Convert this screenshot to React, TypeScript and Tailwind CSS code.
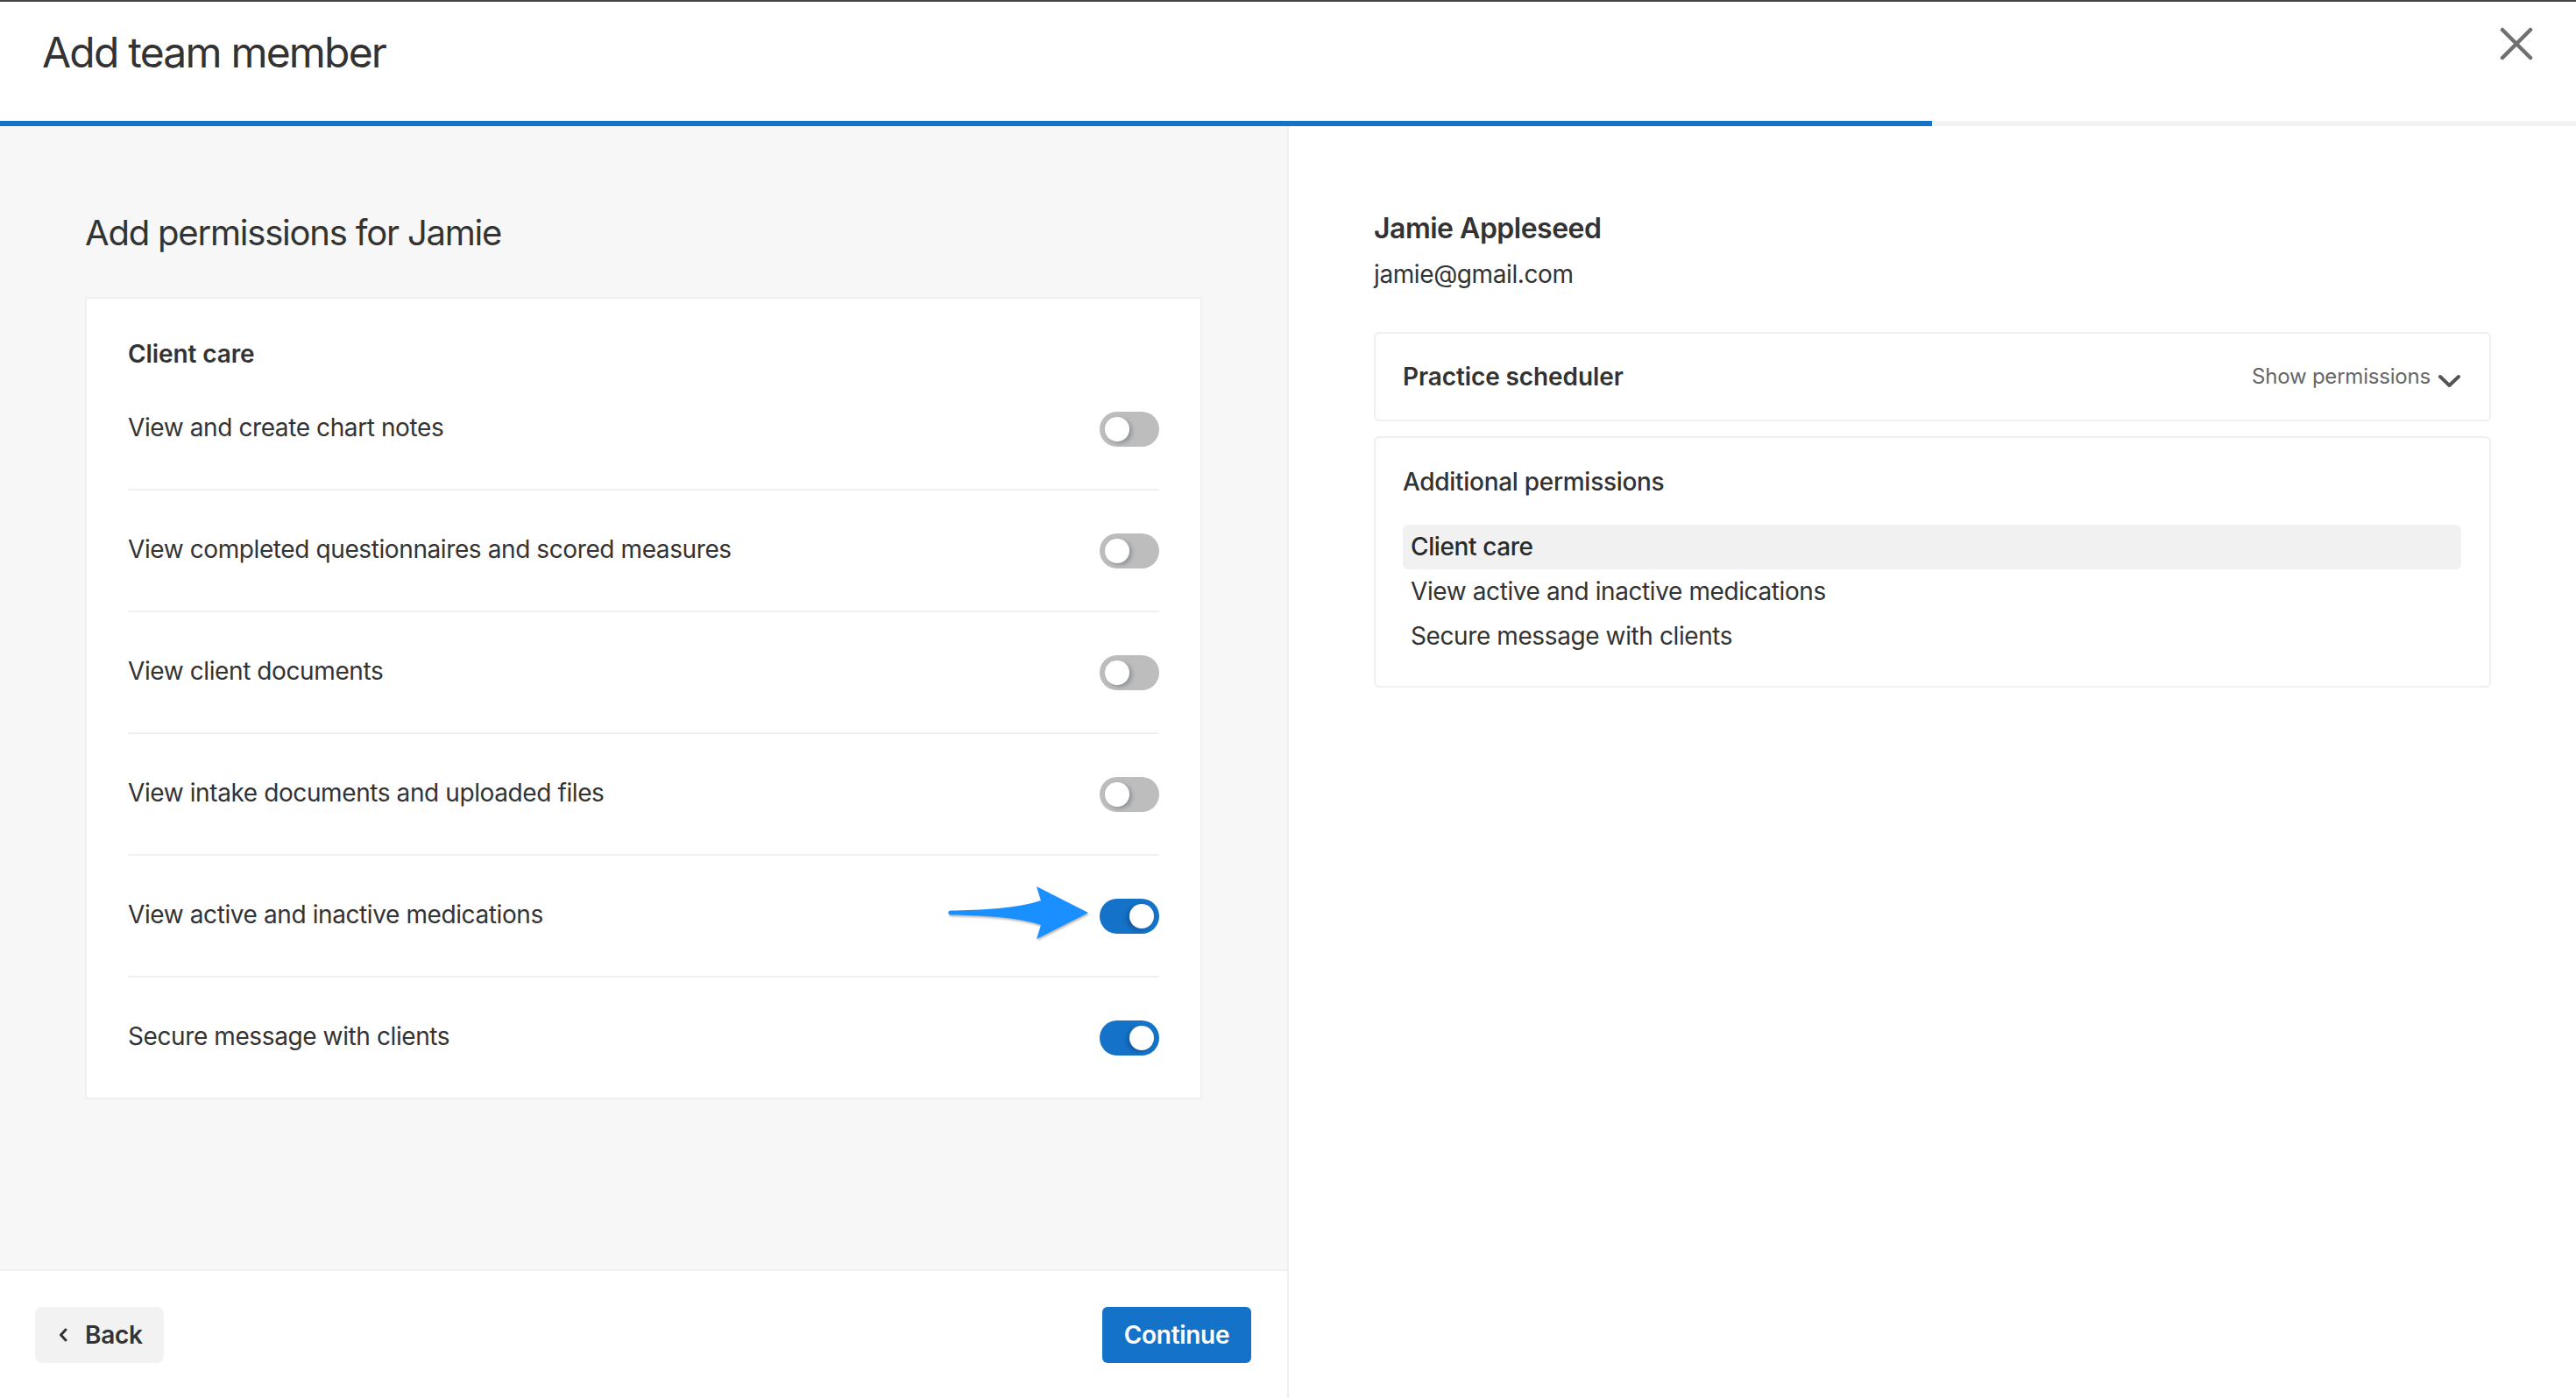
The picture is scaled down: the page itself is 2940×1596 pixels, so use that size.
import React from "react";

const permissions = [
  { label: "View and create chart notes", on: false },
  { label: "View completed questionnaires and scored measures", on: false },
  { label: "View client documents", on: false },
  { label: "View intake documents and uploaded files", on: false },
  { label: "View active and inactive medications", on: true, pointer: true },
  { label: "Secure message with clients", on: true },
];

const additional = ["Client care", "View active and inactive medications", "Secure message with clients"];

function Toggle({ on }: { on: boolean }) {
  return (
    <div
      className={
        on
          ? "flex h-[40px] w-[68px] items-center justify-end rounded-full bg-[#1473c8] px-[6px]"
          : "flex h-[40px] w-[68px] items-center justify-start rounded-full bg-[#bdbdbd] px-[6px]"
      }
    >
      <div
        className={
          on
            ? "h-[28px] w-[28px] rounded-full bg-white shadow-[-3px_2px_4px_rgba(20,40,80,0.35)]"
            : "h-[28px] w-[28px] rounded-full bg-white shadow-[3px_2px_4px_rgba(60,70,90,0.35)]"
        }
      />
    </div>
  );
}

function PointerArrow() {
  return (
    <svg
      className="absolute left-[-177px] top-[-19px] drop-shadow-[1px_2px_1px_rgba(0,0,0,0.28)]"
      width="168"
      height="70"
      viewBox="0 0 168 70"
    >
      <path
        d="M7 32.5 C40 32 85 30 110 21 L105 5 L164 35 L105 65 L110 49 C85 40 40 38 7 37.5 C3.5 37.3 3.5 32.7 7 32.5 Z"
        fill="#1a8fff"
      />
    </svg>
  );
}

export default function App() {
  return (
    <div className="flex h-[1596px] w-[2940px] flex-col overflow-hidden bg-white font-['Inter',sans-serif] text-[#333333]">
      <div className="h-[2px] bg-[#444444]" />

      <header className="flex h-[136px] items-start justify-between pl-[48px] pr-[49px] pt-[29px]">
        <h1 className="text-[48px] leading-[58px] font-normal tracking-[-1.8px]">Add team member</h1>
        <button className="h-[38px] w-[38px]">
          <svg width="38" height="38" viewBox="0 0 38 38" fill="none">
            <path d="M3 3 L35 35 M35 3 L3 35" stroke="#707070" strokeWidth="4.5" strokeLinecap="round" />
          </svg>
        </button>
      </header>

      <div className="h-[6px] bg-[#f2f2f2]">
        <div className="h-full w-[2205px] bg-[#1473c8]" />
      </div>

      <div className="flex flex-1">
        <div className="flex w-[1471px] flex-col border-r-2 border-[#f0f0f0]">
          <main className="flex-1 bg-[#f7f7f7] pl-[97px] pt-[98px]">
            <h2 className="text-[40px] leading-[48px] font-normal tracking-[-1.2px]">Add permissions for Jamie</h2>

            <section className="mt-[49px] w-[1275px] border-2 border-[#f0f0f0] bg-white px-[47px] pt-[46px]">
              <h3 className="text-[28px] leading-[34px] font-semibold tracking-[-0.1px]">Client care</h3>
              <ul>
                {permissions.map((p, i) => (
                  <li
                    key={p.label}
                    className={
                      i < permissions.length - 1
                        ? "flex h-[139px] items-center justify-between border-b-2 border-[#f0f0f0]"
                        : "flex h-[137px] items-center justify-between"
                    }
                  >
                    <span className="-mt-[3px] text-[28px] leading-[34px] tracking-[-0.4px]">{p.label}</span>
                    <div className="relative">
                      {p.pointer && <PointerArrow />}
                      <Toggle on={p.on} />
                    </div>
                  </li>
                ))}
              </ul>
            </section>
          </main>

          <footer className="flex h-[147px] items-center justify-between border-t-2 border-[#f0f0f0] bg-white pl-[40px] pr-[41px]">
            <button className="flex h-[64px] w-[147px] items-center gap-[20px] rounded-[8px] bg-[#f2f2f2] pl-[27px]">
              <svg width="10" height="16" viewBox="0 0 10 16" fill="none">
                <path d="M8 2 L2.5 8 L8 14" stroke="#333333" strokeWidth="3" strokeLinecap="round" strokeLinejoin="round" />
              </svg>
              <span className="text-[28px] leading-[34px] font-semibold tracking-[-0.3px]">Back</span>
            </button>
            <button className="flex h-[64px] w-[170px] items-center justify-center rounded-[6px] bg-[#1473c8] text-[28px] leading-[34px] font-semibold tracking-[-0.3px] text-white">
              Continue
            </button>
          </footer>
        </div>

        <aside className="flex-1 pl-[97px] pr-[97px] pt-[97px]">
          <div className="text-[32px] leading-[40px] font-semibold tracking-[-0.5px]">Jamie Appleseed</div>
          <div className="mt-[15px] text-[28px] leading-[34px] tracking-[-0.4px]">jamie@gmail.com</div>

          <div className="mt-[49px] flex h-[102px] items-center justify-between rounded-[6px] border-2 border-[#efefef] pl-[31px] pr-[32px]">
            <span className="text-[28px] leading-[34px] font-semibold tracking-[-0.1px]">Practice scheduler</span>
            <span className="flex items-center gap-[8px] text-[24px] leading-[30px] tracking-[-0.2px] text-[#666666]">
              Show permissions
              <svg className="mt-[10px]" width="27" height="16" viewBox="0 0 27 16" fill="none">
                <path d="M3 3 L13.5 13 L24 3" stroke="#555555" strokeWidth="4" strokeLinecap="round" strokeLinejoin="round" />
              </svg>
            </span>
          </div>

          <div className="mt-[17px] rounded-[6px] border-2 border-[#efefef] pb-[31px] pl-[31px] pr-[32px] pt-[33px]">
            <div className="text-[28px] leading-[34px] font-medium tracking-[-0.3px]">Additional permissions</div>
            <ul className="mt-[32px]">
              {additional.map((a, i) => (
                <li
                  key={a}
                  className={
                    i === 0
                      ? "h-[51px] rounded-[6px] bg-[#f1f1f1] pl-[9px] text-[28px] leading-[51px] font-medium tracking-[-0.4px] text-[#2b2b2b]"
                      : "h-[51px] pl-[9px] text-[28px] leading-[51px] tracking-[-0.4px]"
                  }
                >
                  {a}
                </li>
              ))}
            </ul>
          </div>
        </aside>
      </div>
    </div>
  );
}
